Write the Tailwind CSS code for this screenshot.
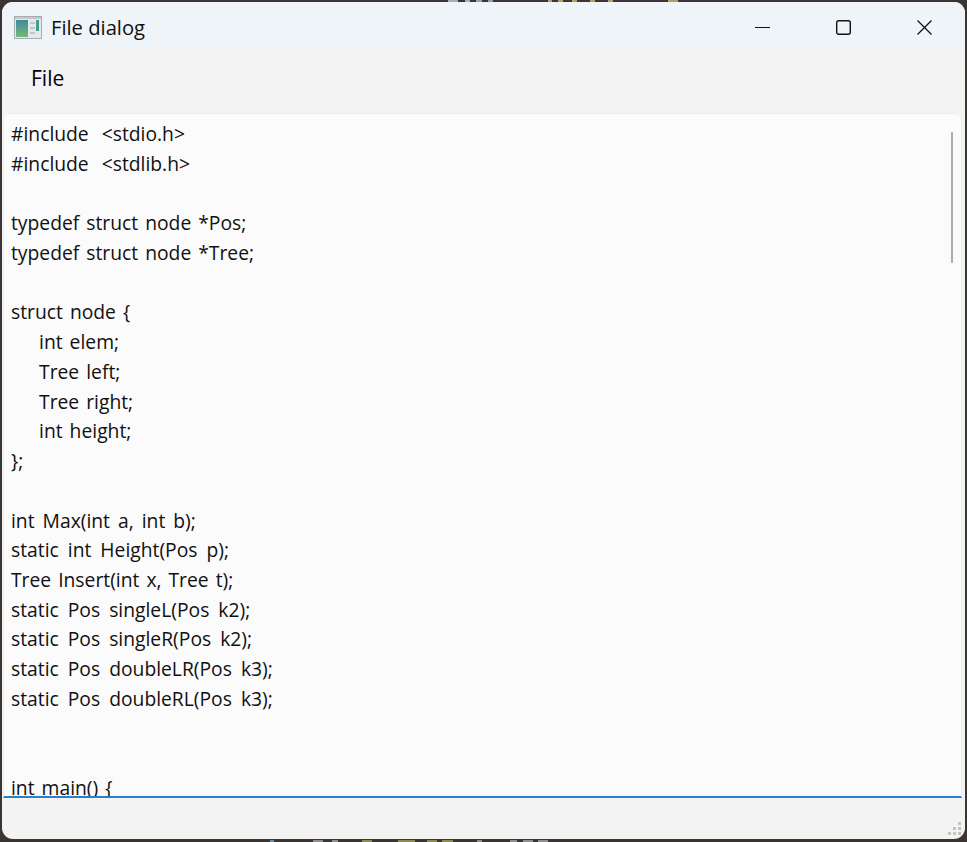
<!DOCTYPE html>
<html lang="en">
<head>
    <meta charset="UTF-8">
    <title>File dialog</title>
    <script src="https://cdn.jsdelivr.net/npm/@tailwindcss/browser@4"></script>
</head>
<body class="bg-[#3a3532] overflow-hidden">
    <!-- bits of desktop showing round the window -->
    <div class="absolute top-0 left-[448px] w-[10px] h-[2px] bg-[#a8acb0]"></div>
    <div class="absolute top-0 left-[465px] w-[5px] h-[2px] bg-[#9fb0bb]"></div>
    <div class="absolute top-0 left-[476px] w-[6px] h-[2px] bg-[#8fa3ad]"></div>
    <div class="absolute top-0 left-[488px] w-[5px] h-[2px] bg-[#7fa0ad]"></div>
    <div class="absolute top-0 left-[548px] w-[4px] h-[2px] bg-[#b59a6a]"></div>
    <div class="absolute top-0 left-[558px] w-[5px] h-[2px] bg-[#b59a6a]"></div>
    <div class="absolute top-0 left-[572px] w-[5px] h-[2px] bg-[#b59a6a]"></div>
    <div class="absolute top-0 left-[590px] w-[5px] h-[2px] bg-[#b59a6a]"></div>
    <div class="absolute top-0 left-[608px] w-[5px] h-[2px] bg-[#b59a6a]"></div>
    <div class="absolute top-0 left-[668px] w-[10px] h-[2px] bg-[#b59a6a]"></div>
    <div class="absolute top-[840px] left-[270px] w-[4px] h-[2px] bg-[#6d8aa8]"></div>
    <div class="absolute top-[840px] left-[313px] w-[10px] h-[2px] bg-[#8f8f8f]"></div>
    <div class="absolute top-[840px] left-[332px] w-[6px] h-[2px] bg-[#8f8f8f]"></div>
    <div class="absolute top-[840px] left-[362px] w-[10px] h-[2px] bg-[#8f8a4e]"></div>
    <div class="absolute top-[840px] left-[398px] w-[17px] h-[2px] bg-[#8f8a4e]"></div>
    <div class="absolute top-[840px] left-[427px] w-[10px] h-[2px] bg-[#8f8a4e]"></div>
    <div class="absolute top-[840px] left-[442px] w-[11px] h-[2px] bg-[#8f8a4e]"></div>
    <div class="absolute top-[840px] left-[477px] w-[5px] h-[2px] bg-[#8f8f8f]"></div>
    <div class="absolute top-[840px] left-[510px] w-[7px] h-[2px] bg-[#8f8f8f]"></div>
    <div class="absolute top-[840px] left-[523px] w-[10px] h-[2px] bg-[#8f8f8f]"></div>
    <div class="absolute top-[840px] left-[538px] w-[10px] h-[2px] bg-[#8f8f8f]"></div>

    <div class="relative w-[967px] h-[842px] pt-[2px] pr-[2px] pb-[3px] pl-[2px]">
        <div class="h-full flex flex-col bg-[#f3f3f3] rounded-[11px] overflow-hidden font-['Open_Sans',sans-serif] text-[#111]">

            <!-- title bar -->
            <div class="h-[48px] shrink-0 flex items-center pt-[2px] bg-[#eff4f9]">
                <svg class="ml-[12px] w-[28px] h-[23px] shrink-0" viewBox="0 0 28 23">
                    <defs>
                        <linearGradient id="pic" x1="0" y1="0" x2="0" y2="1">
                            <stop offset="0" stop-color="#3f8a9c"/>
                            <stop offset="1" stop-color="#74b878"/>
                        </linearGradient>
                    </defs>
                    <rect x="0.5" y="0.5" width="27" height="22" fill="#e6e9ea" stroke="#a5abae"/>
                    <rect x="1" y="1" width="26" height="2" fill="#c4c9cb"/>
                    <rect x="2" y="4" width="12" height="17" fill="url(#pic)"/>
                    <rect x="16" y="6" width="5" height="2" fill="#c2c6c8"/>
                    <rect x="16" y="11" width="5" height="2" fill="#c2c6c8"/>
                    <rect x="16" y="16" width="5" height="2" fill="#c2c6c8"/>
                    <rect x="22" y="4" width="3" height="11" fill="#4a9a94"/>
                </svg>
                <span class="ml-[9px] text-[20.2px] leading-none">File dialog</span>
                <div class="ml-auto flex items-center">
                    <div class="w-[81px] flex items-center justify-center">
                        <svg class="w-[15px] h-[15px]" viewBox="0 0 15 15"><path d="M0 7.5h15" stroke="#111" stroke-width="1.2" fill="none"/></svg>
                    </div>
                    <div class="w-[81px] flex items-center justify-center">
                        <svg class="w-[15px] h-[15px]" viewBox="0 0 15 15"><rect x="0.7" y="0.7" width="13.6" height="13.6" rx="2" stroke="#111" stroke-width="1.4" fill="none"/></svg>
                    </div>
                    <div class="w-[81px] flex items-center justify-center">
                        <svg class="w-[15px] h-[15px]" viewBox="0 0 15 15"><path d="M0.5 0.5l14 14M14.5 0.5l-14 14" stroke="#111" stroke-width="1.3" fill="none"/></svg>
                    </div>
                </div>
            </div>

            <!-- menu bar -->
            <div class="h-[63px] shrink-0 flex items-center pl-[29px] pb-[5px] text-[21px] text-black">File</div>

            <!-- text area -->
            <div class="relative flex-1 min-h-0 ml-[1px] mr-[3px] bg-[#fbfbfb] rounded-t-[6px] border border-[#ececec] border-b-2 border-b-[#2a7fc9] overflow-hidden">
                <pre class="pt-[5px] pl-[7px] font-['Open_Sans',sans-serif] text-[19.3px] leading-[29.73px] text-[#111] [word-spacing:2px]"><span class="[word-spacing:8px]">#include &lt;stdio.h&gt;</span>
<span class="[word-spacing:8px]">#include &lt;stdlib.h&gt;</span>

typedef struct node *Pos;
typedef struct node *Tree;

struct node {
    int elem;
    Tree left;
    Tree right;
    int height;
};

<span class="[word-spacing:3px]">int Max(int a, int b);</span>
<span class="[word-spacing:4px]">static int Height(Pos p);</span>
Tree Insert(int x, Tree t);
<span class="[word-spacing:4px]">static Pos singleL(Pos k2);</span>
<span class="[word-spacing:4px]">static Pos singleR(Pos k2);</span>
<span class="[word-spacing:4px]">static Pos doubleLR(Pos k3);</span>
<span class="[word-spacing:4px]">static Pos doubleRL(Pos k3);</span>


int main() {</pre>
                <div class="absolute top-[18px] right-[8px] w-[2px] h-[131px] rounded-full bg-[#a9a9ae]"></div>
            </div>

            <!-- status bar -->
            <div class="relative h-[41px] shrink-0">
                <svg class="absolute right-[3px] bottom-[3px] w-[14px] h-[14px]" viewBox="0 0 14 14" fill="#c4c4c4">
                    <rect x="10" y="0" width="3" height="3"/>
                    <rect x="5" y="5" width="3" height="3"/>
                    <rect x="10" y="5" width="3" height="3"/>
                    <rect x="0" y="10" width="3" height="3"/>
                    <rect x="5" y="10" width="3" height="3"/>
                    <rect x="10" y="10" width="3" height="3"/>
                </svg>
            </div>
        </div>
    </div>
</body>
</html>
